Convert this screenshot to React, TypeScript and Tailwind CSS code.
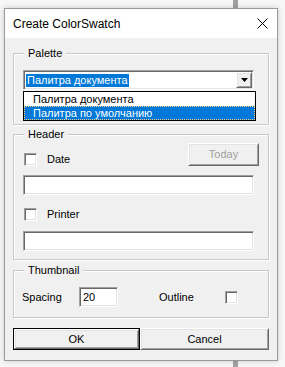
import React from "react";

const sunken =
  "border border-t-[#a0a0a0] border-l-[#a0a0a0] border-r-white border-b-white shadow-[inset_1px_1px_0_#696969,inset_-1px_-1px_0_#e3e3e3]";
const raised =
  "border border-t-white border-l-white border-r-[#696969] border-b-[#696969] shadow-[inset_1px_1px_0_#e3e3e3,inset_-1px_-1px_0_#a0a0a0]";
const etched =
  "border border-[#c8c8c8] shadow-[inset_1px_1px_0_#ffffff,1px_1px_0_#ffffff]";

function Check() {
  return <div className={`w-[13px] h-[13px] bg-white shrink-0 ${sunken}`} />;
}

function Group({
  label,
  className,
  children,
}: {
  label: string;
  className: string;
  children?: React.ReactNode;
}) {
  return (
    <div className={`relative ${etched} ${className}`}>
      <span className="absolute left-[10px] top-[-8px] bg-[#f0f0f0] px-[4px] leading-[14px]">
        {label}
      </span>
      {children}
    </div>
  );
}

export default function App() {
  return (
    <div
      className="relative w-[285px] h-[367px] bg-[#f7f7f7] overflow-hidden text-[11px] text-black"
      style={{ fontFamily: '"Liberation Sans", Arial, sans-serif' }}
    >
      <div className="absolute left-[233px] top-0 w-[5px] h-[8px] bg-[#a2a2a2]" />
      <div className="absolute left-[233px] top-[360px] w-[5px] h-[7px] bg-[#a2a2a2]" />

      <div className="pl-[4px] pt-[8px]">
        <div className="relative w-[274px] h-[353px] border border-[#9a9a9a] bg-[#f0f0f0] shadow-[0_0_6px_rgba(0,0,0,0.18)] flex flex-col">
          {/* title bar */}
          <div className="h-[29px] bg-white flex items-center justify-between pl-[8px] pr-[8px] shrink-0">
            <span className="text-[12px] leading-[14px] pt-[1px]">Create ColorSwatch</span>
            <svg width="11" height="11" viewBox="0 0 11 11" className="mr-[1px]">
              <path d="M0.5 0.5 L10.5 10.5 M10.5 0.5 L0.5 10.5" stroke="#000" strokeWidth="1" />
            </svg>
          </div>

          {/* body */}
          <div className="flex flex-col px-[8px]">
            <Group label="Palette" className="mt-[15px] h-[72px]">
              <div className="pl-[9px] pt-[16px]">
                <div className={`relative w-[231px] h-[20px] bg-white ${sunken} flex items-center`}>
                  <span className="ml-[2px] bg-[#0078d7] text-white px-[1px] leading-[13px] h-[13px]">
                    Палитра документа
                  </span>
                  <div
                    className={`absolute right-[1px] top-[1px] w-[16px] h-[16px] bg-[#f0f0f0] ${raised} flex items-center justify-center`}
                  >
                    <svg width="7" height="4" viewBox="0 0 7 4">
                      <path d="M0 0 H7 L3.5 4 Z" fill="#000" />
                    </svg>
                  </div>
                </div>
              </div>
              {/* open dropdown list */}
              <div className="absolute left-[9px] top-[37px] w-[233px] h-[30px] bg-white border border-black z-10 flex flex-col">
                <div className="h-[14px] pl-[9px] leading-[14px]">Палитра документа</div>
                <div className="h-[14px] pl-[8px] leading-[12px] bg-[#0078d7] text-white border border-dotted border-[#ffd08a]">
                  Палитра по умолчанию
                </div>
              </div>
            </Group>

            <Group label="Header" className="mt-[9px] h-[126px]">
              <div className="flex flex-col px-[9px]">
                <div className="flex justify-between h-[23px] mt-[8px]">
                  <div className="flex items-center gap-[10px] mt-[10px] h-[13px] pl-[1px]">
                    <Check />
                    <span className="leading-[13px]">Date</span>
                  </div>
                  <div
                    className={`w-[71px] h-[23px] bg-[#f0f0f0] ${raised} flex items-center justify-center text-[#a0a0a0] text-[11px]`}
                  >
                    Today
                  </div>
                </div>
                <div className={`mt-[9px] w-[231px] h-[20px] bg-white ${sunken}`} />
                <div className="flex items-center gap-[10px] mt-[13px] h-[13px] pl-[1px]">
                  <Check />
                  <span className="leading-[13px]">Printer</span>
                </div>
                <div className={`mt-[10px] w-[231px] h-[20px] bg-white ${sunken}`} />
              </div>
            </Group>

            <Group label="Thumbnail" className="mt-[10px] h-[48px]">
              <div className="flex items-center mt-[16px] h-[20px] pl-[8px]">
                <span className="w-[57px] leading-[13px]">Spacing</span>
                <div className={`w-[39px] h-[20px] bg-white ${sunken} flex items-center pl-[3px] pt-[1px]`}>
                  20
                </div>
                <span className="ml-[41px] w-[66px] leading-[13px]">Outline</span>
                <Check />
              </div>
            </Group>

            <div className="flex mt-[10px] h-[22px]">
              <div className="w-[127px] h-[22px] border border-black">
                <div className={`w-full h-full bg-[#f0f0f0] ${raised} flex items-center justify-center`}>
                  OK
                </div>
              </div>
              <div
                className={`w-[129px] h-[22px] bg-[#f0f0f0] ${raised} flex items-center justify-center`}
              >
                Cancel
              </div>
            </div>
          </div>
        </div>
      </div>
    </div>
  );
}
